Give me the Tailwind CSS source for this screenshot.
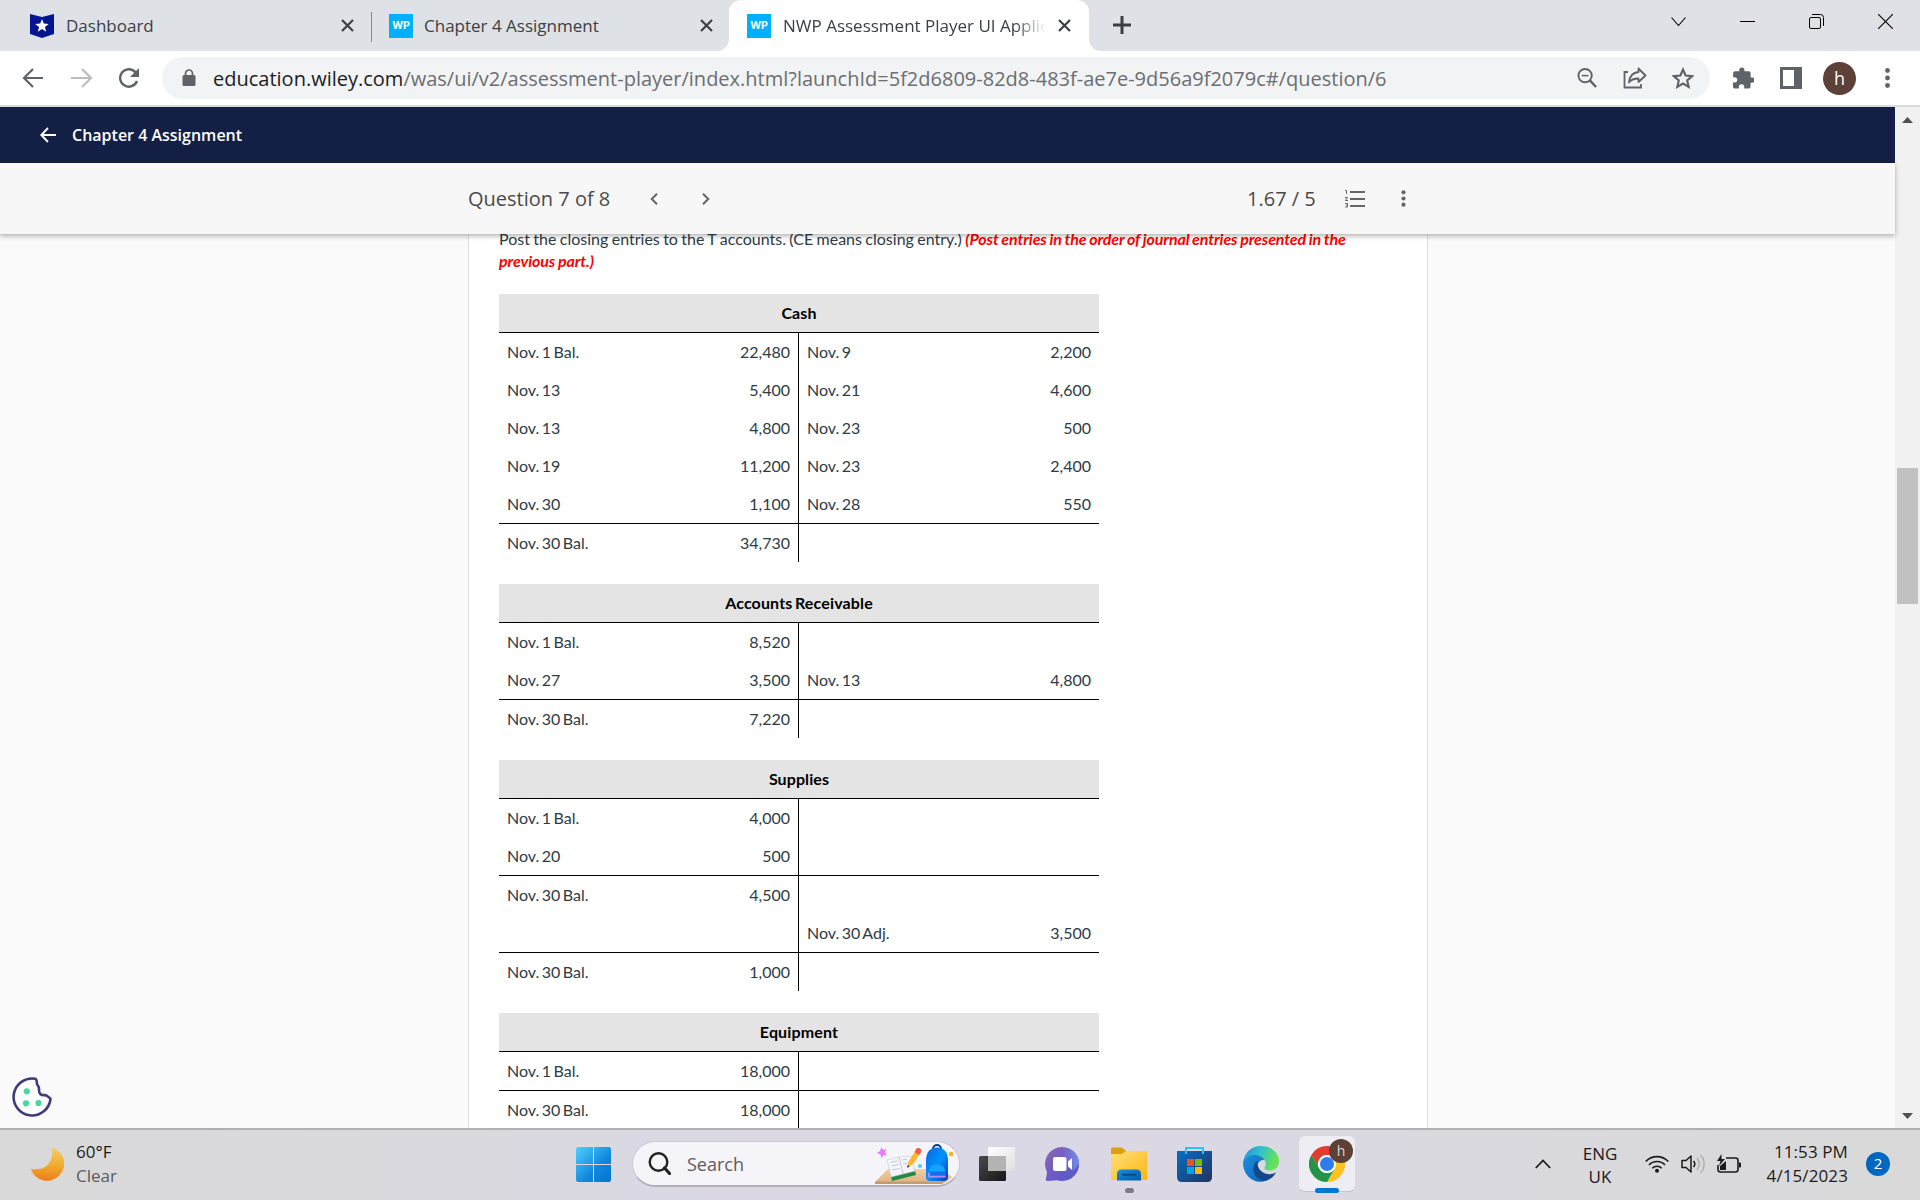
<!DOCTYPE html>
<html lang="en">
 <head>
  <meta charset="utf-8"/>
  <meta content="width=device-width, initial-scale=1.0" name="viewport"/>
  <title>NWP Assessment Player UI Application</title>
  <script src="https://cdn.jsdelivr.net/npm/@tailwindcss/browser@4"></script>
 </head>
 <body class="w-[1920px] h-[1200px] overflow-hidden flex flex-col bg-white font-['Open_Sans','Noto_Sans',sans-serif]">

  <!-- Tab strip -->
  <div class="h-[51px] shrink-0 bg-[#dee1e6] flex text-[#3c4043] text-[17px] leading-[51px]">
   <div class="w-[371px] flex items-center pl-[30px] pr-[16px]">
    <svg class="w-6 h-6" viewBox="0 0 24 24"><path d="M0 0l12 3 12-3v20l-12 4-12-4z" fill="#04168f"/><path d="M12 5l1.8 4.6 5 .3-3.9 3.1 1.3 4.8-4.2-2.7-4.2 2.7 1.3-4.8-3.9-3.1 5-.3z" fill="#fff"/></svg>
    <span class="ml-3 w-[275px] whitespace-nowrap">Dashboard</span>
    <svg class="w-[13px] h-[13px] shrink-0" viewBox="0 0 13 13"><path d="M1 1l11 11M12 1L1 12" stroke="#3c4043" stroke-width="2.2"/></svg>
   </div>
   <div class="w-px h-[30px] mt-3 bg-[#85888c]"></div>
   <div class="w-[357px] flex items-center pl-[17px]">
    <div class="w-6 h-6 bg-[#00b0ff] text-white text-[10.5px] font-bold leading-6 text-center font-['Inter',sans-serif]">WP</div>
    <span class="ml-[11px] w-[276px] whitespace-nowrap">Chapter 4 Assignment</span>
    <svg class="w-[13px] h-[13px] shrink-0" viewBox="0 0 13 13"><path d="M1 1l11 11M12 1L1 12" stroke="#3c4043" stroke-width="2.2"/></svg>
   </div>
   <div class="relative w-[360px] bg-white rounded-t-xl flex items-center pl-[18px]">
    <svg class="absolute -left-3 bottom-0 w-3 h-3" viewBox="0 0 12 12"><path d="M12 0v12H0A12 12 0 0 0 12 0z" fill="#fff"/></svg>
    <svg class="absolute -right-3 bottom-0 w-3 h-3" viewBox="0 0 12 12"><path d="M0 0v12h12A12 12 0 0 1 0 0z" fill="#fff"/></svg>
    <div class="w-6 h-6 bg-[#00b0ff] text-white text-[10.5px] font-bold leading-6 text-center font-['Inter',sans-serif]">WP</div>
    <span class="ml-3 w-[263px] overflow-hidden whitespace-nowrap mask-r-from-88% mask-r-to-100%">NWP Assessment Player UI Application</span>
    <svg class="ml-[12px] w-[13px] h-[13px] shrink-0" viewBox="0 0 13 13"><path d="M1 1l11 11M12 1L1 12" stroke="#3c4043" stroke-width="2.2"/></svg>
   </div>
   <svg class="ml-[24px] mt-[16px] w-[18px] h-[18px]" viewBox="0 0 18 18"><path d="M9 0v18M0 9h18" stroke="#3c4043" stroke-width="3"/></svg>
   <div class="ml-auto mr-[27px] mt-[14px] flex gap-[54px]">
    <svg class="w-[15px] h-[15px]" viewBox="0 0 15 15"><path d="M.5 3.500l7 8 7-8" fill="none" stroke="#000" stroke-width="1.1"/></svg>
    <svg class="w-[15px] h-[15px]" viewBox="0 0 15 15"><path d="M0 7.5h15" stroke="#000"/></svg>
    <svg class="w-[15px] h-[15px]" viewBox="0 0 15 15"><rect x=".5" y="3.5" width="11" height="11" rx="1.5" fill="none" stroke="#000"/><path d="M3 .5h8.500a3 3 0 0 1 3 3V12" fill="none" stroke="#000"/></svg>
    <svg class="w-[15px] h-[15px]" viewBox="0 0 15 15"><path d="M0 0l15 15M15 0L0 15" stroke="#000" stroke-width="1.1"/></svg>
   </div>
  </div>

  <!-- Address bar -->
  <div class="h-[56px] shrink-0 bg-white border-b-2 border-[#d9dadb] flex items-center">
   <svg class="ml-[22px] w-[22px] h-[20px]" viewBox="0 0 22 20" fill="none" stroke="#5f6368" stroke-width="2.2"><path d="M11 1L2 10l9 9M2 10h19"/></svg>
   <svg class="ml-[27px] w-[22px] h-[20px]" viewBox="0 0 22 20" fill="none" stroke="#bbbdbf" stroke-width="2.2"><path d="M11 1l9 9-9 9M20 10H0"/></svg>
   <svg class="ml-[25px] w-[22px] h-[20px]" viewBox="0 0 22 20" fill="none" stroke="#5f6368" stroke-width="2.4"><path d="M18 5A8.700 8.700 0 1 0 19 13"/><path d="M21 0v9h-9z" fill="#5f6368" stroke="none"/></svg>
   <div class="ml-[22px] w-[1548px] h-[42px] rounded-full bg-[#f1f3f4] flex items-center">
    <svg class="ml-[20px] w-[14px] h-[18px]" viewBox="0 0 14 18"><rect x=".5" y="6" width="13" height="11" rx="1.500" fill="#5f6368"/><path d="M3.500 7V4.500a3.500 3.500 0 0 1 7 0V7" fill="none" stroke="#5f6368" stroke-width="1.700"/></svg>
    <div class="ml-[17px] pt-[2px] w-[1364px] text-[20px] whitespace-nowrap text-[#6b6e72]"><span class="text-[#202124]">education.wiley.com</span>/was/ui/v2/assessment-player/index.html?launchId=5f2d6809-82d8-483f-ae7e-9d56a9f2079c#/question/6</div>
    <svg class="w-[20px] h-[20px]" viewBox="0 0 21 21" fill="none" stroke="#5f6368"><circle cx="8.500" cy="8" r="7" stroke-width="2"/><path d="M5 8h7" stroke-width="1.600"/><path d="M13.500 13l6.500 7" stroke-width="2.500"/></svg>
    <svg class="ml-[26px] w-[24px] h-[22px]" viewBox="0 0 24 22" fill="none" stroke="#5f6368" stroke-width="1.800"><path d="M5 5H1.500v15.500H18V17"/><path d="M15.500 1.500l7 7-7 6.500v-3.500c-4 0-7.500 1-9.500 4 .5-6 4-10 9.500-10.500z" stroke-linejoin="round"/></svg>
    <svg class="ml-[25px] w-[22px] h-[22px]" viewBox="0 0 22 22" fill="none" stroke="#5f6368" stroke-width="2.100"><path d="M11 2.500l2.600 6 6.600.6-5 4.300 1.500 6.500L11 16.500l-5.700 3.400 1.500-6.500-5-4.300 6.600-.6z"/></svg>
   </div>
   <svg class="ml-[22px] w-[22px] h-[22px]" viewBox="0 0 23 23" fill="#5f6368"><path d="M21 11h-1.500V6.500a2 2 0 0 0-2-2h-4.500V3.200a2.700 2.700 0 0 0-5.400 0v1.300H3.200a2 2 0 0 0-2 2v4.100h1.500a2.800 2.800 0 0 1 0 5.600H1v4.200a2 2 0 0 0 2 2h4.200v-1.500a2.800 2.800 0 0 1 5.600 0v1.500h4.600a2 2 0 0 0 2-2v-4H21a2.700 2.700 0 0 0 0-5.400z"/></svg>
   <svg class="ml-[26px] w-[22px] h-[22px]" viewBox="0 0 22 22"><path d="M0 0h22v22H0z" fill="#5f6368"/><path d="M3 3h11v16H3z" fill="#fff"/></svg>
   <div class="ml-[21px] w-[33px] h-[33px] rounded-full bg-[#5d4037] text-white text-[18px] leading-[33px] text-center">h</div>
   <svg class="ml-[29px] w-[5px] h-[20px]" viewBox="0 0 5 20" fill="#5f6368"><circle cx="2.500" cy="2.500" r="2.400"/><circle cx="2.500" cy="10" r="2.400"/><circle cx="2.500" cy="17.500" r="2.400"/></svg>
  </div>

  <!-- Page -->
  <div class="h-[1021px] shrink-0 flex bg-[#fafafa] overflow-hidden">
   <div class="w-[1895px] flex flex-col relative">
    <div class="h-[56px] shrink-0 bg-[#131f45] flex items-center text-white">
     <svg class="ml-[40px] w-[16px] h-[16px]" viewBox="0 0 16 16" fill="none" stroke="#fff" stroke-width="1.900"><path d="M8 1L1.300 8 8 15M1.300 8H16"/></svg>
     <span class="ml-4 text-[16px] font-semibold">Chapter 4 Assignment</span>
    </div>
    <div class="h-[71px] shrink-0 bg-[#f7f7f7] shadow-[0_2px_5px_rgba(0,0,0,0.3)] relative z-10 flex items-center text-[20px] text-[#4a4a4a]">
     <span class="ml-[468px] w-[182px] whitespace-nowrap">Question 7 of 8</span>
     <svg class="w-[8px] h-[12px]" viewBox="0 0 8 12" fill="none" stroke="#666" stroke-width="2"><path d="M7 .7L1.700 6 7 11.300"/></svg>
     <svg class="ml-[44px] w-[8px] h-[12px]" viewBox="0 0 8 12" fill="none" stroke="#666" stroke-width="2"><path d="M1 .7L6.300 6 1 11.300"/></svg>
     <span class="ml-[537px] w-[98px] whitespace-nowrap">1.67 / 5</span>
     <svg class="w-[20px] h-[18px]" viewBox="0 0 20 18" fill="none" stroke="#666"><path d="M5 2h15M5 9h15M5 16h15" stroke-width="2"/><path d="M0 .5h1.500V4M0 7.500h2.500L.5 10.500H3M0 13.500h2.500v3.500H0M1 15.200h1.500" stroke-width="1"/></svg>
     <svg class="ml-[36px] w-[5px] h-[17px]" viewBox="0 0 5 17" fill="#666"><circle cx="2.500" cy="2.300" r="2.100"/><circle cx="2.500" cy="8.500" r="2.100"/><circle cx="2.500" cy="14.700" r="2.100"/></svg>
    </div>
    <div class="ml-[468px] w-[960px] h-[894px] shrink-0 bg-white border-x border-[#dedede] pl-[30px] font-['Lato',sans-serif] text-[#2d3b45] text-[16px] overflow-hidden">
     <p class="w-[870px] h-[60px] -mt-[6px] leading-[22px] [word-spacing:-0.7px]">Post the closing entries to the T accounts. (CE means closing entry.) <span class="font-bold italic tracking-[-0.1px] text-[#f00]">(Post entries in the order of journal entries presented in the<br/>previous part.)</span></p>

     <div class="w-[600px] mt-[6px] mb-[22px] [word-spacing:-1.6px]">
      <div class="h-[38px] bg-[#e4e4e4] text-black font-bold text-center tracking-[0.1px] leading-[38px]">Cash</div>
      <div class="border-t border-black flex leading-[38px]">
       <div class="w-[299px] px-2">
        <div class="flex justify-between"><span>Nov. 1 Bal.</span><span>22,480</span></div>
        <div class="flex justify-between"><span>Nov. 13</span><span>5,400</span></div>
        <div class="flex justify-between"><span>Nov. 13</span><span>4,800</span></div>
        <div class="flex justify-between"><span>Nov. 19</span><span>11,200</span></div>
        <div class="flex justify-between"><span>Nov. 30</span><span>1,100</span></div>
       </div>
       <div class="w-[301px] px-2 border-l border-black">
        <div class="flex justify-between"><span>Nov. 9</span><span>2,200</span></div>
        <div class="flex justify-between"><span>Nov. 21</span><span>4,600</span></div>
        <div class="flex justify-between"><span>Nov. 23</span><span>500</span></div>
        <div class="flex justify-between"><span>Nov. 23</span><span>2,400</span></div>
        <div class="flex justify-between"><span>Nov. 28</span><span>550</span></div>
       </div>
      </div>
      <div class="border-t border-black flex leading-[38px]">
       <div class="w-[299px] px-2 flex justify-between"><span>Nov. 30 Bal.</span><span>34,730</span></div>
       <div class="w-[301px] px-2 border-l border-black"></div>
      </div>
     </div>

     <div class="w-[600px] mb-[22px] [word-spacing:-1.6px]">
      <div class="h-[38px] bg-[#e4e4e4] text-black font-bold text-center tracking-[0.15px] leading-[38px]">Accounts Receivable</div>
      <div class="border-t border-black flex leading-[38px]">
       <div class="w-[299px] px-2">
        <div class="flex justify-between"><span>Nov. 1 Bal.</span><span>8,520</span></div>
        <div class="flex justify-between"><span>Nov. 27</span><span>3,500</span></div>
       </div>
       <div class="w-[301px] px-2 pt-[38px] border-l border-black">
        <div class="flex justify-between"><span>Nov. 13</span><span>4,800</span></div>
       </div>
      </div>
      <div class="border-t border-black flex leading-[38px]">
       <div class="w-[299px] px-2 flex justify-between"><span>Nov. 30 Bal.</span><span>7,220</span></div>
       <div class="w-[301px] px-2 border-l border-black"></div>
      </div>
     </div>

     <div class="w-[600px] mb-[22px] [word-spacing:-1.6px]">
      <div class="h-[38px] bg-[#e4e4e4] text-black font-bold text-center tracking-[0.1px] leading-[38px]">Supplies</div>
      <div class="border-t border-black flex leading-[38px]">
       <div class="w-[299px] px-2">
        <div class="flex justify-between"><span>Nov. 1 Bal.</span><span>4,000</span></div>
        <div class="flex justify-between"><span>Nov. 20</span><span>500</span></div>
       </div>
       <div class="w-[301px] px-2 border-l border-black"></div>
      </div>
      <div class="border-t border-black flex leading-[38px]">
       <div class="w-[299px] px-2">
        <div class="flex justify-between"><span>Nov. 30 Bal.</span><span>4,500</span></div>
       </div>
       <div class="w-[301px] px-2 pt-[38px] border-l border-black">
        <div class="flex justify-between"><span>Nov. 30 Adj.</span><span>3,500</span></div>
       </div>
      </div>
      <div class="border-t border-black flex leading-[38px]">
       <div class="w-[299px] px-2 flex justify-between"><span>Nov. 30 Bal.</span><span>1,000</span></div>
       <div class="w-[301px] px-2 border-l border-black"></div>
      </div>
     </div>

     <div class="w-[600px] [word-spacing:-1.6px]">
      <div class="h-[38px] bg-[#e4e4e4] text-black font-bold text-center tracking-[0.15px] leading-[38px]">Equipment</div>
      <div class="border-t border-black flex leading-[38px]">
       <div class="w-[299px] px-2 flex justify-between"><span>Nov. 1 Bal.</span><span>18,000</span></div>
       <div class="w-[301px] px-2 border-l border-black"></div>
      </div>
      <div class="border-t border-black flex leading-[38px]">
       <div class="w-[299px] px-2 flex justify-between"><span>Nov. 30 Bal.</span><span>18,000</span></div>
       <div class="w-[301px] px-2 border-l border-black"></div>
      </div>
     </div>
    </div>

    <!-- Cookie button -->
    <svg class="absolute left-[12px] bottom-[11px] w-[40px] h-[40px]" viewBox="0 0 40 40"><path d="M23.500 1.800A18.500 18.500 0 1 0 38.500 22c-1-1.500-2.500-2.500-4-3.500-2-1-4 .5-6-1.300-2-1.700-1.500-4-1.500-6 0-2-1.500-2.500-2-4.200-.5-1.500.5-3.500-1.500-5.200z" fill="#fff" stroke="#3f3a7c" stroke-width="2.600" stroke-linejoin="round"/><circle cx="14.800" cy="14.300" r="3.100" fill="#47d7a0"/><circle cx="14" cy="26.300" r="3.100" fill="#47d7a0"/><circle cx="26.500" cy="26" r="3.100" fill="#47d7a0"/></svg>
   </div>
   <!-- Scrollbar -->
   <div class="w-[25px] bg-[#f1f1f1] flex flex-col items-center">
    <svg class="mt-[10px] w-[11px] h-[6px]" viewBox="0 0 11 6"><path d="M0 6L5.500 0 11 6z" fill="#505050"/></svg>
    <div class="mt-[345px] w-[21px] h-[136px] bg-[#c1c1c1]"></div>
    <svg class="mt-auto mb-[9px] w-[11px] h-[6px]" viewBox="0 0 11 6"><path d="M0 0l5.500 6L11 0z" fill="#505050"/></svg>
   </div>
  </div>

  <!-- Taskbar -->
  <div class="h-[72px] shrink-0 border-t-2 border-[#b0b0b3] pb-[2px] bg-linear-to-r from-[#d9d9d9] via-[#dbd8e6] to-[#d9d9d9] flex items-center text-[17px] leading-6 text-[#1b1b1b]">
   <svg class="ml-[30px] w-[34px] h-[34px]" viewBox="0 0 34 34"><defs><linearGradient id="moon" x2="0" y2="1"><stop offset="0" stop-color="#f7c86a"/><stop offset=".5" stop-color="#f0b030"/><stop offset="1" stop-color="#ee7c1a"/></linearGradient></defs><path d="M22 .5A17 17 0 1 1 .8 21.500C6 23.500 14 22 18 17.500 22 13 23 6.500 22 .5z" fill="url(#moon)"/></svg>
   <div class="ml-[12px] w-[500px]"><div>60°F</div><div class="text-[#5c5c5c]">Clear</div></div>
   <svg class="w-[35px] h-[35px]" viewBox="0 0 35 35"><defs><linearGradient id="win" x2="1" y2="1"><stop offset="0" stop-color="#50d0ff"/><stop offset=".6" stop-color="#1088dc"/><stop offset="1" stop-color="#0475d2"/></linearGradient></defs><path d="M1.500 0H17v17H0V1.500zM18 0h15.500L35 1.500V17H18zM0 18h17v17H1.500L0 33.500zM18 18h17v15.500L33.500 35H18z" fill="url(#win)"/></svg>
   <div class="ml-[21px] w-[328px] h-[46px] rounded-full bg-[#f5f4f8] border border-[#cbc8d4] border-b-2 border-b-[#b3b0bc] flex items-center">
    <svg class="ml-[15px] w-[23px] h-[23px]" viewBox="0 0 23 23" fill="none" stroke="#222"><circle cx="10.500" cy="10" r="8.800" stroke-width="2.400"/><path d="M16.500 16l5 5.500" stroke-width="3.200" stroke-linecap="round"/></svg>
    <span class="ml-4 w-[187px] text-[18px] text-[#5c5b60]">Search</span>
    <svg class="w-[82px] h-[42px]" viewBox="0 0 82 42">
     <defs><linearGradient id="desk" x2="0" y2="1"><stop offset="0" stop-color="#f4cfa4"/><stop offset="1" stop-color="#dfb483"/></linearGradient><linearGradient id="bag" x2="1" y2="1"><stop offset="0" stop-color="#0b63e0"/><stop offset=".5" stop-color="#0094ff"/><stop offset="1" stop-color="#0838b0"/></linearGradient></defs>
     <path d="M14 26h54l10 8-6 5H1z" fill="url(#desk)"/><path d="M1 38.500h71l-4 2.500H1z" fill="#c39b70"/>
     <path d="M14 19l4 19 24-6-2-8z" fill="#218a42"/><path d="M13 17l4 17 12-3 12-3-4-15-12 1z" fill="#f4f4fb" stroke="#c9cad8" stroke-width=".6"/><path d="M25 14l4 17" stroke="#b9bac8" stroke-width=".8"/><path d="M16.500 19.500l7-1.500M17.500 23l7-1.500M18.500 27l7-1.500M28 17l5-1M29 21l4-1" stroke="#c3c5d3" stroke-width="1"/>
     <path d="M33 25l1.500-6.500L41 8.500l4.500 3-6.500 9.500z" fill="#ffb62c"/><path d="M33 25l.7-3 2 1.200z" fill="#3a3a3a"/><path d="M40.500 9l2-3.500c3-1.500 5.500 1 4.500 3.800L45 12z" fill="#f15a4a"/>
     <path d="M7.500 4l1.500 3 3.500-1-1.500 3.500 2 3-3.500-.5-2 3-1-3.500L3 10l3-2z" fill="#e77cf5"/>
     <circle cx="46" cy="23" r="2.100" fill="#50d2e6"/><circle cx="77" cy="11" r="2.200" fill="#fbb016"/>
     <path d="M59 6a4 4 0 0 1 8 0" fill="none" stroke="#0a3b96" stroke-width="2"/><path d="M52 18C52 8 57 4.500 63 4.500s11 3.500 11 13.500v16q0 4-4 4H56q-4 0-4-4z" fill="url(#bag)"/><path d="M54.500 34v-4c0-6 3.500-8.500 8.500-8.500s8.500 2.500 8.500 8.500v4z" fill="#126ff0"/><path d="M55 28.500c0-4.500 3-7 8-7s8 2.500 8 7z" fill="#13a5ff"/><path d="M55 33.500V29.500M54.500 33.700h17" stroke="#b58bff" stroke-width="1.800"/>
    </svg>
   </div>
   <svg class="ml-[19px] w-[36px] h-[36px]" viewBox="0 0 36 36"><defs><linearGradient id="tvd" x2="1" y2="1"><stop stop-color="#4a4a4a"/><stop offset="1" stop-color="#161616"/></linearGradient><linearGradient id="tvl" x2="1" y2="1"><stop stop-color="#fff"/><stop offset="1" stop-color="#dedede"/></linearGradient></defs><rect y="10" width="27" height="25" rx="1.500" fill="url(#tvd)"/><rect x="9" y="1" width="27" height="24" rx="1.500" fill="url(#tvl)"/><path d="M9 10h18v15H9z" fill="#b3b3b3"/></svg>
   <svg class="ml-[30px] w-[34px] h-[36px]" viewBox="0 0 34 36"><defs><linearGradient id="chat" x2="1" y2="1"><stop stop-color="#8b6aa8"/><stop offset=".5" stop-color="#6e5bc6"/><stop offset="1" stop-color="#5059c9"/></linearGradient><linearGradient id="chatr" x2="1"><stop stop-color="#779bf0" stop-opacity="0"/><stop offset="1" stop-color="#779bf0"/></linearGradient></defs><path d="M17 1a17 17 0 1 1-5 33.200L3 35c-3 0-2.500-2-1.500-4.500L2 26A17 17 0 0 1 17 1z" fill="url(#chat)"/><path d="M17 1a17 17 0 0 1 17 17l-6 7-8-14z" fill="url(#chatr)" opacity=".8"/><rect x="8" y="11" width="13.500" height="14" rx="2" fill="#fff"/><path d="M23 15.500l4-3.500v12l-4-3.500z" fill="#fff"/></svg>
   <div class="relative ml-[32px] w-[36px] h-[36px]">
    <svg class="w-[36px] h-[36px]" viewBox="0 0 36 36"><defs><linearGradient id="fold" x2="1" y2="1"><stop stop-color="#ffe07a"/><stop offset="1" stop-color="#f9b611"/></linearGradient><linearGradient id="fb" x2="1" y2="1"><stop stop-color="#1390e0"/><stop offset="1" stop-color="#0359a8"/></linearGradient></defs><path d="M0 3q0-1.500 1.500-1.500h9.500L15 5h20q1 0 1 1v6H0z" fill="#dfa00d"/><path d="M0 8h11l4-3h21v29H0z" fill="url(#fold)"/><path d="M6 34.500V28q0-4.500 4.500-4.500h15q4.500 0 4.500 4.500v6.500z" fill="url(#fb)"/><path d="M11 28.700h14" stroke="#064984" stroke-width="1.800"/></svg>
    <div class="absolute left-[14px] top-[42px] w-[9px] h-[5px] rounded-full bg-[#7e7b84]"></div>
   </div>
   <svg class="ml-[30px] w-[35px] h-[36px]" viewBox="0 0 35 36"><defs><linearGradient id="store" x2="1" y2="1"><stop stop-color="#046fc4"/><stop offset="1" stop-color="#23335e"/></linearGradient></defs><path d="M0 5h35v26q0 5-5 5H5q-5 0-5-5z" fill="url(#store)"/><path d="M9 8V2h17v6" fill="none" stroke="#34bdf2" stroke-width="2"/><path d="M10 13h7v7h-7z" fill="#f25022"/><path d="M18 13h7v7h-7z" fill="#7fba00"/><path d="M10 21h7v7h-7z" fill="#00a4ef"/><path d="M18 21h7v7h-7z" fill="#ffb900"/></svg>
   <svg class="ml-[31px] w-[36px] h-[36px]" viewBox="0 0 36 36"><defs><linearGradient id="edgeTop" x2="1" y2=".3"><stop stop-color="#218fd8"/><stop offset=".5" stop-color="#30c2cd"/><stop offset="1" stop-color="#66e352"/></linearGradient><linearGradient id="edgeLow" x2="1" y2="1"><stop stop-color="#1b8fdc"/><stop offset="1" stop-color="#0c63bb"/></linearGradient></defs><path d="M0 17C1 7 8 0 18 0s18 7 18 15c0 7-5 9.500-9 9.500-5 0-6.500-2-5-4 2-4 0-7.500-5-9C10 10 4 12 0 17z" fill="url(#edgeTop)"/><path d="M0 17C3 10 10 8 15 9.500c4 1.200 6.500 4 6.500 4-4 0-8 4-7.500 9 .7 7 7 10.500 11 11.500-13 6-25-4-25-17z" fill="url(#edgeLow)"/><path d="M14.500 14.500C9 18 9 28 15 32.500c7 5.500 15 0 18-6-7 3.500-14 1-17-4-1.500-3-1.500-5-1.500-8z" fill="#114a8b"/></svg>
   <div class="relative ml-[20px] w-[56px] h-[56px] rounded-md bg-[#eeedf3] border-b border-[#c5c3cd]">
    <svg class="absolute left-[10px] top-[10px] w-[36px] h-[36px]" viewBox="0 0 36 36"><path d="M18 9h15.600A18 18 0 0 0 2.400 9l7.800 13.500A9 9 0 0 1 18 9z" fill="#e33b2e"/><path d="M33.600 9H18a9 9 0 0 1 7.800 13.500L18 36A18 18 0 0 0 33.600 9z" fill="#fcc31e"/><path d="M2.400 9l7.800 13.500a9 9 0 0 0 15.600 0L18 36A18 18 0 0 1 2.400 9z" fill="#219447"/><circle cx="18" cy="18" r="9" fill="#fff"/><circle cx="18" cy="18" r="7" fill="#2f7ced"/></svg>
    <div class="absolute left-[30px] top-[3px] w-6 h-6 rounded-full bg-[#5d4037] text-[#ddd5d2] text-[14px] leading-[23px] text-center">h</div>
    <div class="absolute left-[16px] top-[52px] w-6 h-[5px] rounded-full bg-[#0078d4]"></div>
   </div>
   <svg class="ml-[180px] w-[16px] h-[10px]" viewBox="0 0 16 10"><path d="M.8 9L8 1.500 15.200 9" fill="none" stroke="#1b1b1b" stroke-width="1.800"/></svg>
   <div class="ml-[23px] w-[52px] text-center leading-[23px] text-[17px] pt-[2px]"><div>ENG</div><div>UK</div></div>
   <svg class="ml-[19px] w-[24px] h-[18px]" viewBox="0 0 24 18" fill="none" stroke="#1b1b1b" stroke-width="1.600"><path d="M.7 6.500a15.500 15.500 0 0 1 22.600 0M4 10a11 11 0 0 1 16 0M7.300 13.200a6.500 6.500 0 0 1 9.400 0"/><circle cx="12" cy="15.700" r="2" fill="#1b1b1b" stroke="none"/></svg>
   <svg class="ml-[12px] w-[24px] h-[20px]" viewBox="0 0 24 20" fill="none" stroke="#1b1b1b" stroke-width="1.500"><path d="M1 6.500h4L10 2v16l-5-4.500H1z" stroke-linejoin="round"/><path d="M12.500 7a4.500 4.500 0 0 1 0 6"/><path d="M16 4a9 9 0 0 1 0 12M19.500 1a13 13 0 0 1 0 18" stroke="#b0b0b0"/></svg>
   <svg class="ml-[12px] w-[24px] h-[20px]" viewBox="0 0 24 20"><path d="M9 4h9.500q2.500 0 2.500 2.500v9q0 2.500-2.500 2.500H3.500Q1 18 1 15.500V11" fill="none" stroke="#1b1b1b" stroke-width="1.600"/><path d="M22 8.500h1q1 0 1 1v3q0 1-1 1h-1zM3 16v-4l6-5v9zM4.500 0L0 7h3.500L2 12l6-7H4.500z" fill="#1b1b1b"/></svg>
   <div class="w-[107px] text-right whitespace-nowrap tracking-[0.1px]"><div>11:53 PM</div><div>4/15/2023</div></div>
   <div class="ml-[18px] w-6 h-6 rounded-full bg-[#0067c0] text-white text-[15px] leading-[23px] text-center">2</div>
  </div>
 </body>
</html>
